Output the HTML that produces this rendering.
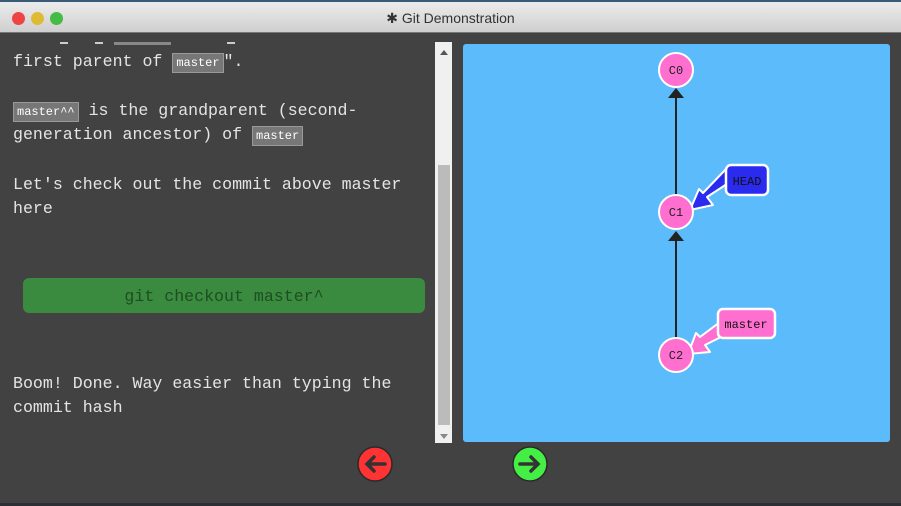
<!DOCTYPE html>
<html><head><style>
body{margin:0;width:901px;height:506px;background:#424242;overflow:hidden;position:relative;font-family:"Liberation Mono",monospace}
.tb{position:absolute;left:0;top:0;width:901px;height:33px;background:linear-gradient(#ececec,#cfcfcf);border-bottom:1px solid #777;border-top:2px solid #3a5a78;box-sizing:border-box}
.dot{position:absolute;top:10px;width:13px;height:13px;border-radius:50%}
.title{position:absolute;left:0;width:901px;top:8px;text-align:center;font:14px "Liberation Sans",sans-serif;color:#333}
.t{position:absolute;left:13px;color:#e4e4e4;font-size:16.6px;line-height:24px;white-space:pre}
.c{background:#777;color:#fff;font-size:12px;padding:2px 3px;border:1px solid #999}
</style></head><body>
<div class="tb">
<div class="dot" style="left:12px;background:#e44"></div>
<div class="dot" style="left:31px;background:#db3"></div>
<div class="dot" style="left:50px;background:#4b4"></div>
<div class="title">✱ Git Demonstration</div>
</div>
<div style="position:absolute;left:60px;top:42px;width:8px;height:2px;background:#ccc"></div>
<div style="position:absolute;left:95px;top:42px;width:8px;height:2px;background:#ccc"></div>
<div style="position:absolute;left:114px;top:42px;width:57px;height:3px;background:#888"></div>
<div style="position:absolute;left:227px;top:42px;width:8px;height:2px;background:#ccc"></div>
<div class="t" style="top:50px">first parent of <span class="c">master</span>".</div>
<div class="t" style="top:99px"><span class="c">master^^</span> is the grandparent (second-</div>
<div class="t" style="top:123px">generation ancestor) of <span class="c">master</span></div>
<div class="t" style="top:173px">Let's check out the commit above master</div>
<div class="t" style="top:197px">here</div>
<div style="position:absolute;left:23px;top:278px;width:402px;height:35px;background:#3a8a40;border-radius:6px;color:#1e4e22;font-size:16.6px;line-height:37px;text-align:center">git checkout master^</div>
<div class="t" style="top:372px">Boom! Done. Way easier than typing the</div>
<div class="t" style="top:396px">commit hash</div>
<div style="position:absolute;left:435px;top:42px;width:17px;height:401px;background:#f0f0f0"></div>
<div style="position:absolute;left:438px;top:165px;width:12px;height:260px;background:#bbb"></div>
<div style="position:absolute;left:440px;top:50px;border:4px solid transparent;border-bottom:5px solid #555;border-top:0"></div>
<div style="position:absolute;left:440px;top:434px;border:4px solid transparent;border-top:5px solid #888;border-bottom:0"></div>
<div style="position:absolute;left:463px;top:44px;width:427px;height:398px;background:#5cbbfa;border-radius:3px"></div>
<svg style="position:absolute;left:0;top:0" width="901" height="506">
<g stroke="#222" stroke-width="2"><line x1="676" y1="95" x2="676" y2="196"/><line x1="676" y1="238" x2="676" y2="338"/></g>
<polygon points="668,98 676,88 684,98" fill="#222"/>
<polygon points="668,241 676,231 684,241" fill="#222"/>
<polygon points="727,168 733,180 707,197 713,205 690,210 699,189 703,193" fill="#2b2bf0" stroke="#fff" stroke-width="2" stroke-linejoin="round"/>
<rect x="726" y="165" width="42" height="30" rx="5" fill="#2b2bf0" stroke="#fff" stroke-width="2.5"/>
<text x="747" y="185" font-family="Liberation Mono" font-size="12" text-anchor="middle" fill="#111">HEAD</text>
<polygon points="720,322 725,335 705,345 710,352 688,354 696,333 700,337" fill="#ff6fcf" stroke="#fff" stroke-width="2" stroke-linejoin="round"/>
<rect x="718" y="309" width="57" height="29" rx="5" fill="#ff6fcf" stroke="#fff" stroke-width="2.5"/>
<text x="746" y="328" font-family="Liberation Mono" font-size="12" text-anchor="middle" fill="#111">master</text>
<g fill="#ff6fcf" stroke="#fff" stroke-width="2">
<circle cx="676" cy="70" r="17"/><circle cx="676" cy="212" r="17"/><circle cx="676" cy="355" r="17"/></g>
<g font-family="Liberation Mono" font-size="12" text-anchor="middle" fill="#222">
<text x="676" y="74">C0</text><text x="676" y="216">C1</text><text x="676" y="359">C2</text></g>
<circle cx="375" cy="464" r="17" fill="#f33" stroke="#2a2a2a" stroke-width="1.5"/>
<path d="M385 464H367M374 457L367 464L374 471" stroke="#333" stroke-width="3.5" fill="none" stroke-linecap="round"/>
<circle cx="530" cy="464" r="17" fill="#4e4" stroke="#2a2a2a" stroke-width="1.5"/>
<path d="M520 464H538M531 457L538 464L531 471" stroke="#333" stroke-width="3.5" fill="none" stroke-linecap="round"/>
</svg>
<div style="position:absolute;left:0;top:503px;width:901px;height:3px;background:#2a3036"></div>
</body></html>
